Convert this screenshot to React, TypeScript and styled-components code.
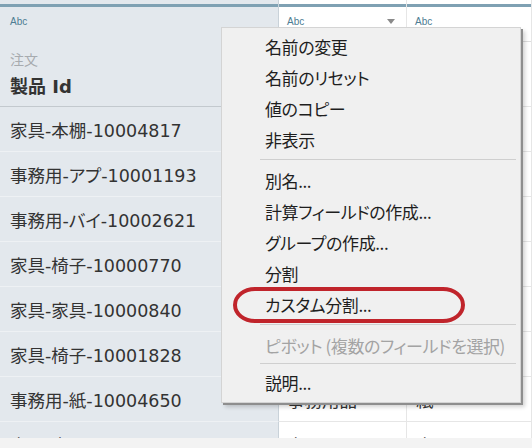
import React from "react";
import styled, { createGlobalStyle } from "styled-components";

const GlobalStyle = createGlobalStyle`
  *, *::before, *::after {
    box-sizing: border-box;
  }
  html, body {
    margin: 0;
    padding: 0;
  }
  body {
    width: 532px;
    height: 448px;
    overflow: hidden;
    background: #f2f2f2;
    font-family: "DejaVu Sans", "Noto Sans CJK JP", sans-serif;
  }
`;

const KEY_BG = "#e3e8ed";

const Page = styled.div`
  position: relative;
  width: 532px;
  height: 448px;
  display: flex;
  flex-direction: column;
  background: #f2f2f2;
`;

const Grid = styled.div`
  flex: none;
  height: 438px;
  overflow: hidden;
  display: grid;
  grid-template-columns: 279px 128px 1fr;
  grid-template-rows: 107px;
  grid-auto-rows: 45px;
`;

const BottomBand = styled.div`
  flex: 1;
  background: #f3f3f3;
`;

const HeaderCell = styled.div<{ $key?: boolean }>`
  display: flex;
  flex-direction: column;
  background: ${({ $key }) => ($key ? KEY_BG : "#ffffff")};
  border-right: 1px solid ${({ $key }) => ($key ? "#c9d2d9" : "#e6e6e6")};
  border-bottom: 1px solid ${({ $key }) => ($key ? "#c3c9ce" : "#e6e6e6")};
`;

const TopBar = styled.div`
  height: 3px;
  margin-top: 4px;
  background: #7fa1b3;
`;

const TypeRow = styled.div<{ $underline?: boolean }>`
  display: flex;
  align-items: center;
  justify-content: space-between;
  height: ${({ $underline }) => ($underline ? "35px" : "30px")};
  padding: ${({ $underline }) => ($underline ? "0 11px 5px 8px" : "0 10px")};
  border-bottom: 1px solid
    ${({ $underline }) => ($underline ? "#dedede" : "transparent")};
`;

const TypeLabel = styled.span`
  font-family: "Liberation Sans", Arial, sans-serif;
  font-size: 10px;
  color: #4e7d93;
`;

const DropArrow = styled.span`
  width: 0;
  height: 0;
  border-left: 4px solid transparent;
  border-right: 4px solid transparent;
  border-top: 5px solid #8a8a8a;
`;

const TableName = styled.div`
  margin-top: 13px;
  padding-left: 10px;
  font-size: 14px;
  line-height: 20px;
  color: #a7abaf;
`;

const FieldName = styled.div`
  margin-top: 6px;
  padding-left: 10px;
  font-size: 18px;
  line-height: 22px;
  font-weight: bold;
  color: #333333;
`;

const Cell = styled.div<{ $key?: boolean; $pad: number }>`
  display: flex;
  align-items: center;
  padding-left: ${({ $pad }) => $pad}px;
  font-size: 17.5px;
  color: #333333;
  white-space: nowrap;
  overflow: hidden;
  font-feature-settings: "palt";
  background: ${({ $key }) => ($key ? KEY_BG : "#ffffff")};
  border-right: 1px solid ${({ $key }) => ($key ? "#c9d2d9" : "#e6e6e6")};
  border-bottom: 1px solid ${({ $key }) => ($key ? "#eef1f4" : "#e6e6e6")};
`;

const Menu = styled.div`
  position: absolute;
  left: 221px;
  top: 27px;
  width: 300px;
  padding: 3px 0 4px;
  background: #f0f0f0;
  border: 1px solid #d4d4d4;
  box-shadow: 2px 2px 0 #8e8e8e, 4px 4px 4px rgba(0, 0, 0, 0.18);
`;

const MenuItem = styled.div<{ $disabled?: boolean }>`
  height: 31px;
  line-height: 31px;
  padding-left: 43px;
  font-size: 17px;
  letter-spacing: -0.4px;
  white-space: nowrap;
  font-family: "Noto Sans CJK JP", "DejaVu Sans", sans-serif;
  font-feature-settings: "palt";
  color: ${({ $disabled }) => ($disabled ? "#a3a3a3" : "#1e1e1e")};
`;

const Separator = styled.div<{ $tight?: boolean }>`
  height: 1px;
  margin: ${({ $tight }) => ($tight ? "2px 4px 3px 38px" : "4px 4px 5px 38px")};
  background: #cfcfcf;
`;

const Highlight = styled.div`
  position: absolute;
  left: 233px;
  top: 287px;
  width: 232px;
  height: 36px;
  border: 4px solid #c0242b;
  border-radius: 22px / 18px;
`;

const rows = [
  ["家具-本棚-10004817", "家具", "本棚"],
  ["事務用-アプ-10001193", "事務用品", "家電"],
  ["事務用-バイ-10002621", "事務用品", "バインダー"],
  ["家具-椅子-10000770", "家具", "椅子"],
  ["家具-家具-10000840", "家具", "家具"],
  ["家具-椅子-10001828", "家具", "椅子"],
  ["事務用-紙-10004650", "事務用品", "紙"],
  ["家具-家具-10001542", "家具", "家具"],
];

type Entry = { label: string; disabled?: boolean } | "sep" | "sep-tight";

const menu: Entry[] = [
  { label: "名前の変更" },
  { label: "名前のリセット" },
  { label: "値のコピー" },
  { label: "非表示" },
  "sep",
  { label: "別名..." },
  { label: "計算フィールドの作成..." },
  { label: "グループの作成..." },
  { label: "分割" },
  { label: "カスタム分割..." },
  "sep",
  { label: "ピボット (複数のフィールドを選択)", disabled: true },
  "sep-tight",
  { label: "説明..." },
];

export default function App() {
  return (
    <>
      <GlobalStyle />
      <Page>
        <Grid>
          <HeaderCell $key>
            <TopBar />
            <TypeRow>
              <TypeLabel>Abc</TypeLabel>
            </TypeRow>
            <TableName>注文</TableName>
            <FieldName>製品 Id</FieldName>
          </HeaderCell>
          <HeaderCell>
            <TopBar />
            <TypeRow $underline>
              <TypeLabel>Abc</TypeLabel>
              <DropArrow />
            </TypeRow>
          </HeaderCell>
          <HeaderCell>
            <TopBar />
            <TypeRow $underline>
              <TypeLabel>Abc</TypeLabel>
            </TypeRow>
          </HeaderCell>
          {rows.map(([id, cat, sub], i) => (
            <React.Fragment key={i}>
              <Cell $key $pad={10}>
                {id}
              </Cell>
              <Cell $pad={8}>{cat}</Cell>
              <Cell $pad={9}>{sub}</Cell>
            </React.Fragment>
          ))}
        </Grid>
        <BottomBand />
        <Menu>
          {menu.map((m, i) =>
            m === "sep" || m === "sep-tight" ? (
              <Separator key={i} $tight={m === "sep-tight"} />
            ) : (
              <MenuItem key={i} $disabled={m.disabled}>
                {m.label}
              </MenuItem>
            )
          )}
        </Menu>
        <Highlight />
      </Page>
    </>
  );
}
